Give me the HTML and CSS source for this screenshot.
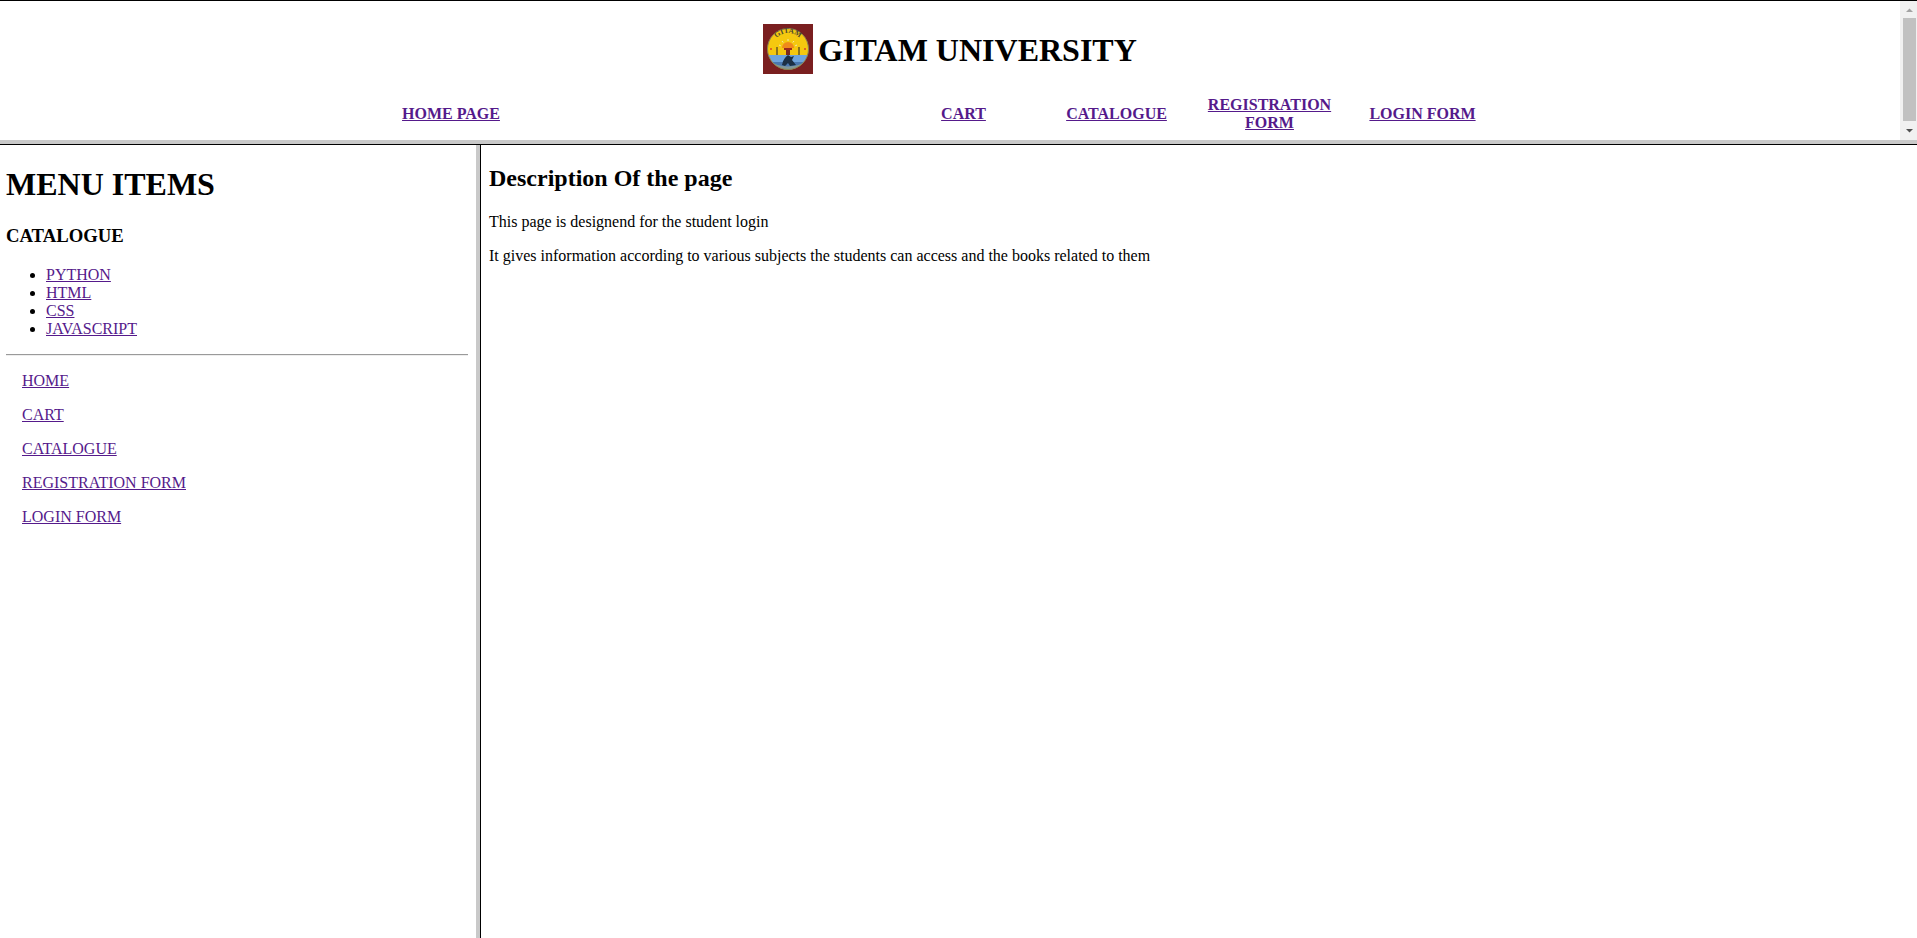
FILE: index.html
```html
<!DOCTYPE html>
<html lang="en">
<head>
<meta charset="utf-8">
<title>GITAM UNIVERSITY</title>
<link rel="stylesheet" href="styles.css">
</head>
<body>
<div class="frameset">
  <header class="top">
    <div class="top-content">
      <h1 class="brand">
        <svg class="logo" width="50" height="50" viewBox="0 0 50 50">
          <defs>
            <clipPath id="disc"><circle cx="25" cy="25" r="20.500"/></clipPath>
            <path id="arc" d="M9 25a16 16 0 0 1 32 0"/>
          </defs>
          <rect width="50" height="50" fill="#7a1f20"/>
          <circle cx="25" cy="25" r="20.500" fill="#f5c80f"/>
          <g clip-path="url(#disc)">
            <rect x="0" y="31" width="50" height="8" fill="#6ea4dc"/>
            <rect x="0" y="38" width="50" height="12" fill="#4a78b0"/>
            <path d="M4 36q21 13 42 0v12H4z" fill="#e8d070" opacity=".35"/>
            <path d="M19 41c1-5 3-8 6-10l3 2 3-1-2 4 4 5-6 1-2-3-3 3z" fill="#1c3044"/>
          </g>
          <circle cx="25" cy="25" r="20.500" fill="none" stroke="#8d8450" stroke-width="1"/>
          <text class="seal" font-size="7.500" font-weight="bold" fill="#4a4630"><textPath href="#arc" startOffset="50%" text-anchor="middle">GITAM</textPath></text>
          <path d="M19 24a6 6 0 0 1 12 0z" fill="#f08a1a"/>
          <path d="M25 15v2M19 17l1.200 1.500M31 17l-1.200 1.500M16 21l1.800.800M34 21l-1.800.800" stroke="#f3e9b0" stroke-width="1"/>
          <rect x="21" y="24" width="8" height="2" fill="#9b2a1e"/>
          <rect x="23" y="26" width="4" height="5" fill="#7a2a1e"/>
          <path d="M14 23v8M36 23v8" stroke="#6a5a20" stroke-width="1.500"/>
          <circle cx="8" cy="25" r="1" fill="#d8442a"/>
          <circle cx="42" cy="25" r="1" fill="#d8442a"/>
        </svg>
        <span class="brand-name">GITAM UNIVERSITY</span>
      </h1>
      <nav class="topnav">
        <a href="#">HOME PAGE</a>
        <a href="#">CART</a>
        <a href="#">CATALOGUE</a>
        <a href="#">REGISTRATION FORM</a>
        <a href="#">LOGIN FORM</a>
      </nav>
    </div>
    <div class="scrollbar">
      <svg class="arrow" width="17" height="17" viewBox="0 0 17 17"><path d="M6 11h7L9.500 7.500z" fill="#a3a3a3"/></svg>
      <div class="track"><div class="thumb"></div></div>
      <svg class="arrow" width="17" height="17" viewBox="0 0 17 17"><path d="M6 6h7L9.500 9.500z" fill="#505050"/></svg>
    </div>
  </header>
  <div class="lower">
    <aside class="side">
      <h1 class="side-title">MENU ITEMS</h1>
      <h3 class="side-sub">CATALOGUE</h3>
      <ul class="side-list">
        <li><a href="#">PYTHON</a></li>
        <li><a href="#">HTML</a></li>
        <li><a href="#">CSS</a></li>
        <li><a href="#">JAVASCRIPT</a></li>
      </ul>
      <hr class="rule">
      <div class="side-links">
        <p><a href="#">HOME</a></p>
        <p><a href="#">CART</a></p>
        <p><a href="#">CATALOGUE</a></p>
        <p><a href="#">REGISTRATION FORM</a></p>
        <p><a href="#">LOGIN FORM</a></p>
      </div>
    </aside>
    <main class="main">
      <h2 class="main-title">Description Of the page</h2>
      <p>This page is designend for the student login</p>
      <p>It gives information according to various subjects the students can access and the books related to them</p>
    </main>
  </div>
</div>
</body>
</html>
```
FILE: styles.css
```css
html, body {
  margin: 0;
  height: 100%;
  overflow: hidden;
  background: #fff;
  color: #000;
  font-family: "Liberation Serif", "Times New Roman", serif;
  font-size: 16px;
}
a { color: #551a8b; }
.frameset {
  height: 938px;
  display: flex;
  flex-direction: column;
  border-top: 1px solid #000;
  box-sizing: border-box;
}
.top {
  height: 139px;
  flex: none;
  display: flex;
  border-bottom: 4px solid #c9c9c9;
}
.top-content { flex: 1; min-width: 0; }
.brand {
  margin: 23px 0 0;
  height: 50px;
  display: flex;
  justify-content: center;
  align-items: center;
  gap: 5px;
  font-size: 32px;
  font-weight: bold;
  line-height: 1;
}
.brand-name { padding-top: 2px; }
.logo { display: block; flex: none; }
.seal { font-family: "Liberation Serif", serif; }
.topnav {
  margin-top: 22px;
  padding-left: 15px;
  display: grid;
  grid-template-columns: 872px repeat(4, 153px);
  align-items: center;
  font-weight: bold;
  text-align: center;
  line-height: 18px;
}
.scrollbar {
  width: 17px;
  flex: none;
  background: #f1f1f1;
  display: flex;
  flex-direction: column;
}
.arrow { display: block; flex: none; }
.track { flex: 1; padding: 0 1px 2px 3px; display: flex; }
.thumb { flex: 1; background: #c1c1c1; }
.lower {
  flex: 1;
  min-height: 0;
  display: flex;
  border-top: 1px solid #000;
}
.side {
  width: 480px;
  flex: none;
  box-sizing: border-box;
  padding: 0 8px 0 6px;
  border-right: 4px solid #c9c9c9;
}
.side-title { margin: 21px 0 0; font-size: 32px; line-height: 37px; }
.side-sub { margin: 22px 0 0; font-size: 18.720px; line-height: 22px; }
.side-list { margin: 19px 0 0; padding-left: 40px; line-height: 18px; }
.rule { margin: 16px 0 0; border: 0; border-top: 1px solid #9a9a9a; border-bottom: 1px solid #eee; }
.side-links { padding-left: 16px; }
.side-links p { margin: 16px 0 0; line-height: 18px; }
.main {
  flex: 1;
  border-left: 1px solid #000;
  padding: 0 8px;
}
.main-title { margin: 19px 0 0; font-size: 24px; line-height: 28px; }
.main p { margin: 16px 0 0; line-height: 18px; }
.main-title + p { margin-top: 21px; }
```
